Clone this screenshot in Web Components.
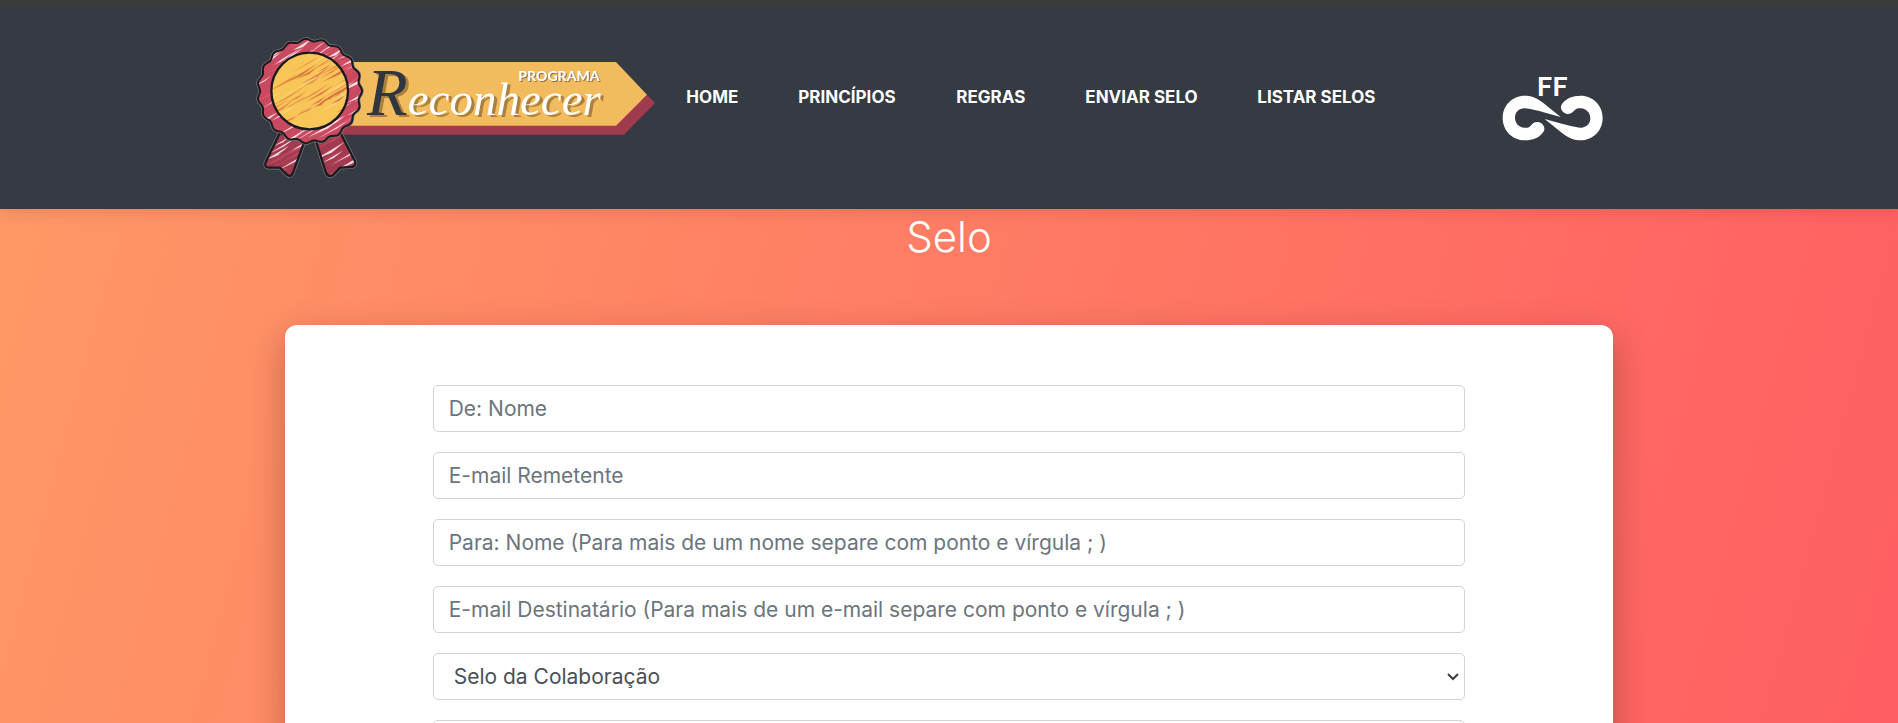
<!DOCTYPE html>
<html lang="pt-BR">
<head>
<meta charset="utf-8">
<meta name="viewport" content="width=device-width, initial-scale=1">
<title>Programa Reconhecer</title>
<style>
  html, body { margin: 0; }
  body { font-family: Inter, "Open Sans", sans-serif; font-size: 21px; }
</style>
</head>
<body>
<selo-page>
  <site-header slot="header">
    <reconhecer-logo slot="brand"></reconhecer-logo>
    <nav-link href="#home">HOME</nav-link>
    <nav-link href="#principios">PRINCÍPIOS</nav-link>
    <nav-link href="#regras">REGRAS</nav-link>
    <nav-link href="#enviar">ENVIAR SELO</nav-link>
    <nav-link href="#listar">LISTAR SELOS</nav-link>
    <ff-logo slot="partner"></ff-logo>
  </site-header>
  <page-title>Selo</page-title>
  <form-card>
    <text-field label="De: Nome"></text-field>
    <text-field label="E-mail Remetente" type="email"></text-field>
    <text-field label="Para: Nome (Para mais de um nome separe com ponto e vírgula ; )"></text-field>
    <text-field label="E-mail Destinatário (Para mais de um e-mail separe com ponto e vírgula ; )"></text-field>
    <select-field label="Selo" option="Selo da Colaboração"></select-field>
    <message-field></message-field>
  </form-card>
</selo-page>
<script>
const define = (name, markup, setup) => customElements.define(name, class extends HTMLElement {
  constructor() {
    super();
    const t = document.createElement('template');
    t.innerHTML = markup;
    this.attachShadow({ mode: 'open' }).append(t.content.cloneNode(true));
  }
  connectedCallback() { if (setup) setup(this, this.shadowRoot); }
});

define('selo-page', `
<style>
  :host { display: block; height: 100vh; overflow: hidden; background: linear-gradient(105deg, #ff9966, #ff5e62); }
</style>
<slot name="header"></slot>
<main><slot></slot></main>`);

define('site-header', `
<style>
  :host { display: block; position: relative; border-top: 7px solid #3c3c3c; background: #363a42; box-shadow: 0 2px 16px rgba(0,0,0,.12); }
  header { display: flex; align-items: flex-start; width: 73.2%; margin: 0 auto; padding: 28px 0 29px; }
  nav { display: grid; grid-template-columns: 112px 158px 129px 172px 130px; margin: 52px 0 0 27px; }
  .partner { margin: 28px 40px 0 auto; }
</style>
<header>
  <slot name="brand"></slot>
  <nav aria-label="Principal"><slot></slot></nav>
  <div class="partner"><slot name="partner"></slot></div>
</header>`);

define('nav-link', `
<style>
  :host { display: block; white-space: nowrap; }
  a { display: block; color: #fff; text-decoration: none; font-weight: 700; font-size: 17px; line-height: 20px; }
</style>
<a><slot></slot></a>`, (el, root) => root.querySelector('a').setAttribute('href', el.getAttribute('href')));

define('reconhecer-logo', `
<style>
  :host { display: block; flex: none; }
  svg { display: block; width: 405px; height: 145px; }
  .word { filter: drop-shadow(9px 6px 1px #a9803f); }
  .small { filter: drop-shadow(3px 3px 0 #94713a); }
</style>
<svg viewBox="45 45 1215 435" role="img" aria-label="Programa Reconhecer">
  <defs>
    <clipPath id="ringClip"><path class="scallop"/></clipPath>
    <clipPath id="discClip"><circle cx="212" cy="213" r="115"/></clipPath>
    <clipPath id="tailClip"><path class="tails"/></clipPath>
  </defs>
  <path fill="#a03b4e" d="M300 240H1209L1224 224L1248 249L1155 344H300Z"/>
  <path fill="#f2bb5e" d="M300 126H1131L1224 224L1131 317H300Z"/>
  <path class="tails" fill="#a23a50" stroke="#777a7d" stroke-width="11" stroke-linejoin="round"/>
  <path class="tails" fill="#a23a50"/>
  <g class="tailHatch" clip-path="url(#tailClip)"></g>
  <path class="tails" fill="none" stroke="#1b1b1f" stroke-width="7" stroke-linejoin="round"/>
  <path class="scallop" fill="#c84a60" stroke="#777a7d" stroke-width="10"/>
  <path class="scallop" fill="#c84a60"/>
  <g class="ringHatch" clip-path="url(#ringClip)"></g>
  <path class="scallop" fill="none" stroke="#1b1b1f" stroke-width="6"/>
  <circle cx="212" cy="213" r="115" fill="#f8c557"/>
  <g class="discHatch" clip-path="url(#discClip)"></g>
  <circle cx="212" cy="213" r="115" fill="none" stroke="#1b1b1f" stroke-width="7"/>
  <text class="word" x="384" y="285" fill="#fff" font-family="'Liberation Serif', serif" font-style="italic" font-size="141"><tspan fill="#30363f" font-size="200">R</tspan>econhecer</text>
  <text class="small" x="838" y="183" fill="#fff" font-family="Lato, sans-serif" font-weight="900" font-size="42">PROGRAMA</text>
</svg>`, (el, root) => {
  let d = '';
  const lobes = 19, cx = 212, cy = 213;
  for (let i = 0; i <= 240; i++) {
    const a = i / 240 * Math.PI * 2;
    const r = 153 + 4 * Math.cos(a * lobes);
    d += (i ? 'L' : 'M') + (cx + r * Math.cos(a)).toFixed(1) + ' ' + (cy + r * Math.sin(a)).toFixed(1);
  }
  root.querySelectorAll('.scallop').forEach(p => p.setAttribute('d', d + 'Z'));
  const tails = 'M122 340L80 426Q74 442 90 443H122L146 466Q156 472 162 458L198 360ZM230 360L260 456Q266 472 280 467L304 443L338 441Q354 438 348 424L304 338Z';
  root.querySelectorAll('.tails').forEach(p => p.setAttribute('d', tails));
  // Deterministic tapered pencil strokes rising to the right
  let seed = 7;
  const rnd = () => (seed = (seed * 16807) % 2147483647) / 2147483647;
  const hatch = (sel, n, x, y, w, h, colours) => {
    let out = '';
    for (let i = 0; i < n; i++) {
      const px = x + rnd() * w, py = y + rnd() * h, len = 40 + rnd() * 75, t = 2 + rnd() * 4;
      out += `<path fill="${colours[i % colours.length]}" d="M${px} ${py}l${len} ${-len * .6}l${-len * .45} ${len * .27 + t * 1.6}z"/>`;
    }
    root.querySelector(sel).innerHTML = out;
  };
  hatch('.ringHatch', 190, 20, 60, 340, 340, ['#f6dfe3', '#d9526a', '#cf4a61']);
  hatch('.discHatch', 70, 80, 110, 230, 230, ['#e48b48', '#f8c557', '#da7443', '#fbd27a']);
  hatch('.tailHatch', 75, 50, 350, 300, 130, ['#f3dce1', '#b9485d', '#a23a50']);
});

define('ff-logo', `
<style>
  :host { display: block; }
  svg { display: block; width: 102px; height: 80px; }
</style>
<svg viewBox="67 10 306 240" role="img" aria-label="FF">
  <text x="171" y="108" fill="#fff" font-family="Lato, sans-serif" font-weight="700" font-size="82">FF</text>
  <g fill="#fff">
    <path id="loop" d="M243 172L190 129C170 113 153 108 135 108C98 108 69 137 69 175C69 213 98 242 135 242C160 242 179 234 191 217C199 205 191 193 179 188C165 185 160 191 153 198C147 205 141 205 134 204C118 203 106 190 106 174C106 158 118 146 134 146C152 146 200 160 243 172Z"/>
    <use href="#loop" transform="rotate(180 219 175)"/>
  </g>
</svg>`);

define('page-title', `
<style>
  :host { display: block; text-align: center; }
  h1 { margin: 0; padding: 4px 0 64px; color: #fff; font-weight: 300; font-size: 42px; line-height: 48px; }
</style>
<h1><slot></slot></h1>`);

define('form-card', `
<style>
  :host { display: block; width: 70%; margin: 0 auto; }
  form { display: grid; gap: 20px; padding: 60px 148px; background: #fff; border-radius: 12px; box-shadow: 0 12px 36px rgba(0,0,0,.25); }
</style>
<form><slot></slot></form>`);

const fieldStyle = `
  :host { display: block; }
  input, select, textarea { display: block; box-sizing: border-box; width: 100%; height: 47px; margin: 0; padding: 0 15px;
    border: 1px solid #ced4da; border-radius: 5px; background-color: #fff; color: #495057; font: inherit; font-weight: 400; outline: 0; }
  ::placeholder { color: #6c757d; opacity: 1; }`;

define('text-field', `<style>${fieldStyle}</style><input>`, (el, root) => {
  const input = root.querySelector('input');
  input.type = el.getAttribute('type') || 'text';
  input.placeholder = el.getAttribute('label');
  input.setAttribute('aria-label', el.getAttribute('label'));
});

define('select-field', `<style>${fieldStyle}
  div { display: grid; }
  select, svg { grid-area: 1 / 1; }
  select { appearance: none; padding: 0 20px; }
  svg { place-self: center end; width: 12px; height: 8px; margin-right: 6px; pointer-events: none; }
</style>
<div><select><option></option></select>
<svg viewBox="0 0 12 8" fill="none" stroke="#3c4146" stroke-width="2"><path d="M1 1l5 5l5-5"/></svg></div>`, (el, root) => {
  root.querySelector('option').textContent = el.getAttribute('option');
  root.querySelector('select').setAttribute('aria-label', el.getAttribute('label'));
});

define('message-field', `<style>${fieldStyle} textarea { height: 120px; padding: 8px 15px; resize: none; }</style>
<textarea aria-label="Mensagem"></textarea>`);
</script>
</body>
</html>
